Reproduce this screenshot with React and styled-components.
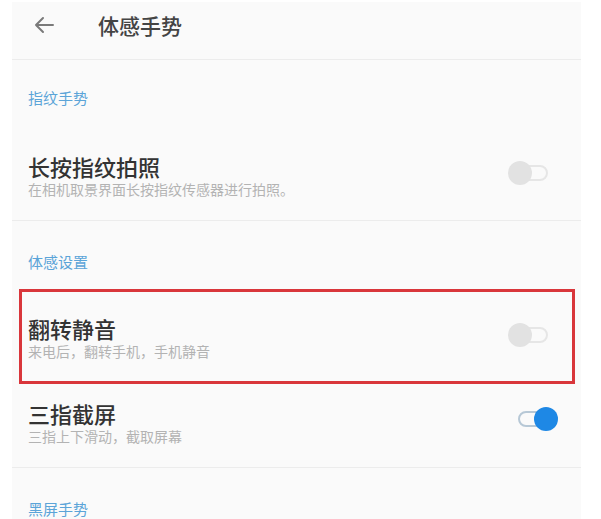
import React from "react";
import styled, { createGlobalStyle } from "styled-components";

const GlobalStyle = createGlobalStyle`
    body {
        margin: 0;
        background: #ffffff;
        font-family: "Noto Sans CJK SC", "Noto Sans", sans-serif;
    }
`;

const items = [
    { section: "指纹手势" },
    {
        title: "长按指纹拍照",
        sub: "在相机取景界面长按指纹传感器进行拍照。",
        on: false,
        divider: true,
    },
    { section: "体感设置" },
    {
        title: "翻转静音",
        sub: "来电后，翻转手机，手机静音",
        on: false,
        marked: true,
    },
    {
        title: "三指截屏",
        sub: "三指上下滑动，截取屏幕",
        on: true,
        divider: true,
    },
    { section: "黑屏手势" },
];

function App() {
    const renderItems = () => {
        return items.map((item, i) =>
            item.section ? (
                <SectionTitle key={i} first={i === 0}>
                    {item.section}
                </SectionTitle>
            ) : (
                <Row key={i} marked={item.marked} divider={item.divider}>
                    <Texts>
                        <Title>{item.title}</Title>
                        <Sub>{item.sub}</Sub>
                    </Texts>
                    <Switch on={item.on}>
                        <Track on={item.on} />
                        <Thumb on={item.on} />
                    </Switch>
                </Row>
            )
        );
    };

    return (
        <>
            <GlobalStyle />
            <Panel>
                <Header>
                    <Back>
                        <svg width="22" height="18" viewBox="0 0 22 18">
                            <path
                                d="M20 9H3M10 2L3 9l7 7"
                                fill="none"
                                stroke="#7a7a7a"
                                strokeWidth="2"
                                strokeLinecap="round"
                                strokeLinejoin="round"
                            />
                        </svg>
                    </Back>
                    <HeaderTitle>体感手势</HeaderTitle>
                </Header>
                {renderItems()}
            </Panel>
        </>
    );
}

export default App;

const Panel = styled.div`
    margin: 2px 0 0 12px;
    width: 569px;
    height: 517px;
    overflow: hidden;
    background: #fafafa;
`;
const Header = styled.header`
    height: 58px;
    box-sizing: border-box;
    padding: 9px 0 0 21px;
    display: flex;
    align-items: flex-start;
    border-bottom: 1px solid #ececec;
`;
const Back = styled.div`
    width: 22px;
    height: 28px;
    display: flex;
    align-items: center;
`;
const HeaderTitle = styled.h1`
    margin: 0 0 0 43px;
    font-size: 21px;
    line-height: 28px;
    font-weight: 500;
    color: #444;
`;
const SectionTitle = styled.div`
    padding: ${(p) => (p.first ? "28px" : "31px")} 16px 17px;
    font-size: 15px;
    line-height: 20px;
    color: #5ba4d8;
`;
const Row = styled.div`
    display: flex;
    align-items: center;
    justify-content: space-between;
    box-sizing: border-box;
    margin: ${(p) => (p.marked ? "0 6px -12px 7px" : "0")};
    padding: ${(p) => (p.marked ? "22px 14px 21px 6px" : "27px 23px 22px 16px")};
    border: ${(p) => (p.marked ? "3px solid #d9363b" : "none")};
    border-bottom: ${(p) =>
        p.marked ? "3px solid #d9363b" : p.divider ? "1px solid #ececec" : "none"};
    position: relative;
    z-index: ${(p) => (p.marked ? 1 : 0)};
`;
const Texts = styled.div`
    display: flex;
    flex-direction: column;
`;
const Title = styled.div`
    font-size: 22px;
    line-height: 28px;
    font-weight: 500;
    color: #333;
`;
const Sub = styled.div`
    font-size: 14px;
    line-height: 18px;
    color: #b3b3b3;
`;
const Switch = styled.div`
    position: relative;
    width: 50px;
    height: 24px;
    margin-top: ${(p) => (p.on ? "-6px" : "-4px")};
`;
const Track = styled.div`
    position: absolute;
    left: 10px;
    top: 4px;
    width: 30px;
    height: 16px;
    box-sizing: border-box;
    border-radius: 8px;
    border: 2px solid ${(p) => (p.on ? "#b7c8d6" : "#e6e6e6")};
`;
const Thumb = styled.div`
    position: absolute;
    top: 0;
    left: ${(p) => (p.on ? "26px" : "0")};
    width: 24px;
    height: 24px;
    border-radius: 50%;
    background: ${(p) => (p.on ? "#1e88e5" : "#e2e2e2")};
`;
